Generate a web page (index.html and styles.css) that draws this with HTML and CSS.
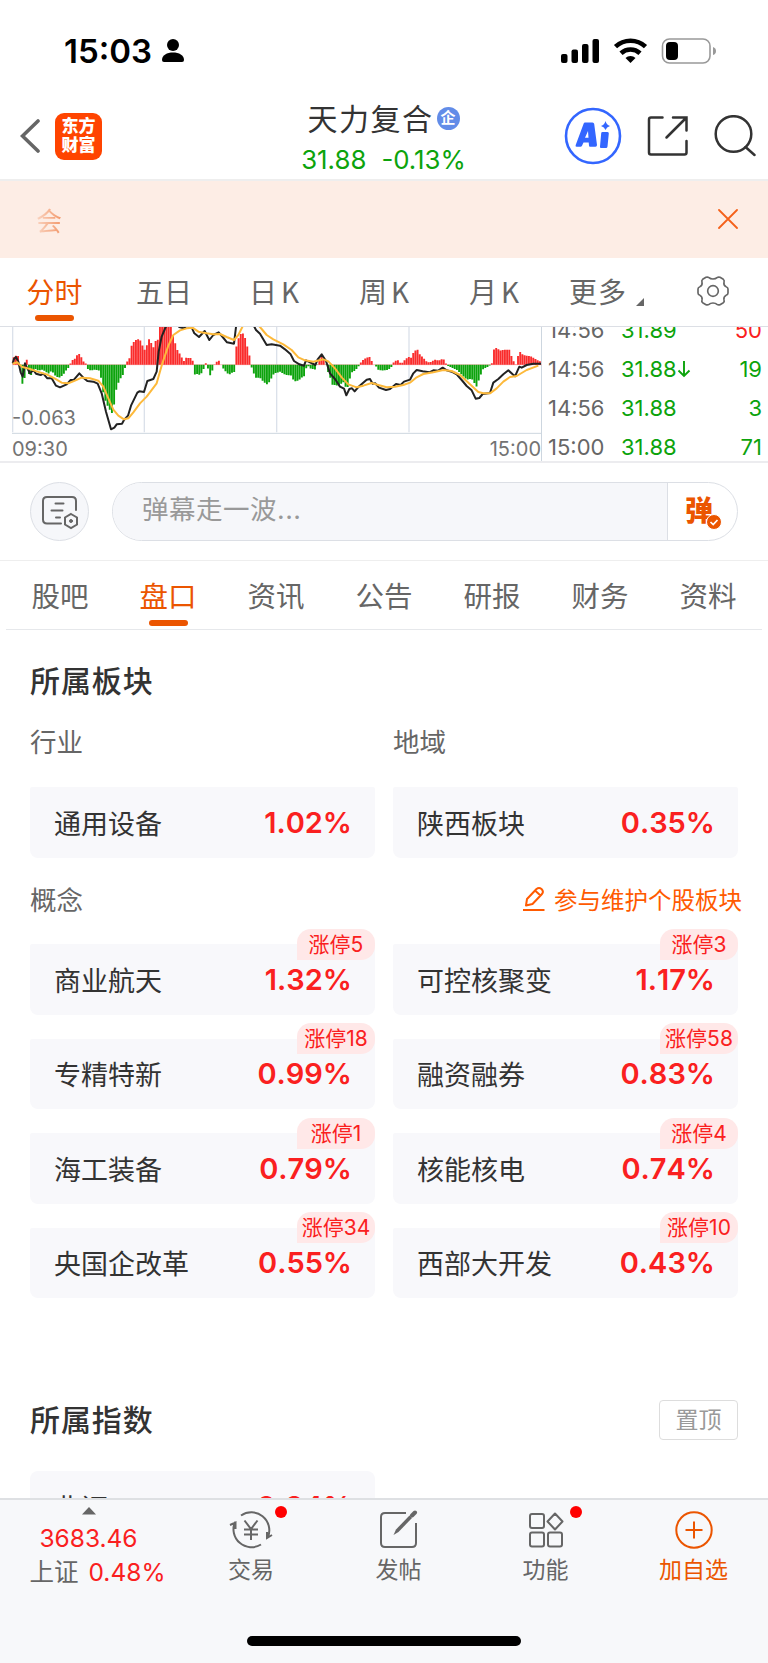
FILE: index.html
```html
<!DOCTYPE html>
<html lang="zh-CN">
  <head>
    <meta charset="utf-8">
    <title>天力复合</title>
    <link rel="stylesheet" href="styles.css">
  </head>
  <body>
    <div class="status-bar">
      <div class="status-time">15:03</div>
      <svg class="status-user" width="24" height="26" viewBox="0 0 24 26"><circle cx="12" cy="7" r="6"/><path d="M1 22C1 17 6 14.500 12 14.500S23 17 23 22Q23 24 21 24H3Q1 24 1 22Z"/></svg>
      <svg class="status-icons" width="158" height="30" viewBox="0 0 158 30">
        <rect x="1" y="18" width="6.500" height="9" rx="2"/>
        <rect x="11.500" y="13.500" width="6.500" height="13.500" rx="2"/>
        <rect x="22" y="8" width="6.500" height="19" rx="2"/>
        <rect x="32.500" y="3" width="6.500" height="24" rx="2"/>
        <g fill="none" stroke="#000" stroke-width="4.600">
          <path d="M55.500 10.600A22 22 0 0 1 85.500 10.600"/>
          <path d="M61 17.200A14 14 0 0 1 80 17.200"/>
        </g>
        <path d="M70.500 27L65.500 22A7 7 0 0 1 75.500 22Z"/>
        <rect x="102.500" y="3" width="47.500" height="24" rx="7" fill="none" stroke="#999" stroke-width="1.600"/>
        <rect x="106" y="6" width="12" height="18" rx="4"/>
        <path d="M153 11Q156 12 156 15T153 19Z" fill="#999"/>
      </svg>
    </div>

    <div class="header">
      <div class="header-left">
        <svg width="20" height="36" viewBox="0 0 20 36"><path d="M18 3L2.500 18L18 33" fill="none" stroke="#666" stroke-width="3.600" stroke-linecap="round"/></svg>
        <div class="logo"><span>东方</span><span>财富</span></div>
      </div>
      <div class="header-title">
        <div class="stock-name">天力复合<span class="tag-qi">企</span></div>
        <div class="stock-price"><span>31.88</span><span>-0.13%</span></div>
      </div>
      <div class="header-right">
        <svg width="58" height="58" viewBox="0 0 58 58">
          <circle cx="29" cy="29" r="27" fill="none" stroke="#3366ff" stroke-width="2.600"/>
          <path fill="#3366ff" fill-rule="evenodd" d="M21 15.500H28.500Q30 15.500 30.200 17L33 38Q33 39.700 31.500 39.700H26Q25 39.700 25 38.500L24.700 35.500H19.500L18 38.700Q17.500 39.700 16.500 39.700H12.500Q11 39.700 11.700 38L19.700 16.500Q20 15.500 21 15.500ZM21 30.700H24.500L24 24Z"/>
          <path fill="#3366ff" d="M38.500 25H43.500Q45 25 44.800 26.500L43.500 39.500Q43.300 41 42 41H37Q35.800 41 36 39.500L37.200 26.300Q37.300 25 38.500 25ZM41.500 14Q42.500 18 46 19Q42.500 20 41.500 23Q40.500 20 37 19Q40.500 18 41.500 14Z"/>
        </svg>
        <svg width="42" height="42" viewBox="0 0 42 42" fill="none" stroke="#333" stroke-width="2.500" stroke-linecap="round"><path d="M15.500 2.500H4Q2 2.500 2 4.500V37.500Q2 39.500 4 39.500H37.500Q39.500 39.500 39.500 37.500V26M26 2.500H39.500V15.500M39.500 2.500L19.500 22.500"/></svg>
        <svg width="42" height="42" viewBox="0 0 42 42" fill="none" stroke="#333" stroke-width="2.500" stroke-linecap="round"><circle cx="19.500" cy="19" r="17.800"/><path d="M31.500 32L40.500 40"/></svg>
      </div>
    </div>

    <div class="notice">
      <span class="notice-text">会</span>
      <svg width="20" height="20" viewBox="0 0 20 20"><path d="M1 1L19 19M19 1L1 19" stroke="#f4611a" stroke-width="1.800" stroke-linecap="round"/></svg>
    </div>

    <div class="period-tabs">
      <div class="period active">分时</div>
      <div class="period">五日</div>
      <div class="period">日<span class="k">K</span></div>
      <div class="period">周<span class="k">K</span></div>
      <div class="period">月<span class="k">K</span></div>
      <div class="period more">更多<svg width="8" height="8" viewBox="0 0 8 8"><path d="M8 0V8H0Z" fill="#666"/></svg></div>
      <div class="period gear"><svg width="34" height="32" viewBox="-51 -48 102 96" fill="none" stroke="#666" stroke-width="5" stroke-linejoin="round"><path d="M0-36Q8-36 12-40Q16-43 21-41L31-35Q35-32 33-26Q31-18 39-13Q45-11 45-6V6Q45 11 39 13Q31 18 33 26Q35 32 31 35L21 41Q16 43 12 40Q8 36 0 36Q-8 36-12 40Q-16 43-21 41L-31 35Q-35 32-33 26Q-31 18-39 13Q-45 11-45 6V-6Q-45-11-39-13Q-31-18-33-26Q-35-32-31-35L-21-41Q-16-43-12-40Q-8-36 0-36Z"/><circle r="16"/></svg></div>
    </div>

    <div class="quote">
      <div class="chart">
        <svg width="542" height="107" viewBox="0 36 1626 321" fill="none">
          <path d="M38 33V352M433 33V352M830 33V352M1227 33V352" stroke="#dbe1ea" stroke-width="4"/>
          <path d="M36 355H1626" stroke="#cdd6df" stroke-width="3"/>
          <g id="bars"></g>
          <g stroke-linejoin="round" stroke-width="6">
            <path stroke="#222" d="M38 145L42 132L48 126L55 140L62 172L68 185L75 145L82 160L90 175L100 165L108 176L122 180L130 176L142 190L155 190L168 212L180 217L200 208L212 195L222 194L238 175L250 188L262 198L280 200L293 206L305 235L318 290L333 343L343 338L350 328L366 326L372 315L384 302L393 272L412 233L418 229L432 231L442 198L460 192L470 170L476 110L485 65L497 36L520 15L538 36L552 40L560 33L575 37L583 55L597 66L614 48L628 75L640 60L656 52L668 66L681 82L702 86L708 36L715 10L755 20L768 45L780 56L800 90L815 88L840 92L855 103L872 118L882 138L898 148L912 152L918 136L930 142L946 150L953 133L965 118L978 138L990 175L1005 192L1020 215L1032 221L1039 241L1048 222L1056 220L1064 229L1075 216L1100 194L1110 192L1118 206L1126 205L1137 218L1158 225L1170 222L1188 207L1202 210L1212 200L1230 194L1240 175L1250 165L1268 169L1288 172L1300 166L1315 167L1328 158L1340 166L1355 170L1370 178L1385 195L1400 213L1415 226L1427 251L1438 249L1448 237L1470 234L1480 203L1495 192L1510 178L1525 166L1538 178L1545 184L1558 155L1565 158L1580 150L1600 146L1623 146"/>
            <path stroke="#fdb93a" d="M38 146L52 142L65 155L90 162L110 169L140 178L165 191L185 203L205 205L225 197L245 188L270 190L295 197L310 215L325 250L340 284L355 302L372 313L385 310L400 292L420 265L440 245L470 205L487 145L505 92L520 60L540 46L560 40L578 38L595 50L620 55L640 58L660 57L680 66L702 75L715 60L727 36L735 15L770 25L785 42L800 60L820 73L850 88L875 105L895 127L915 136L940 140L970 133L985 139L1005 160L1025 187L1045 208L1070 217L1090 212L1115 204L1135 210L1160 217L1185 215L1210 210L1230 203L1250 187L1270 177L1300 172L1330 165L1355 168L1380 180L1410 208L1435 231L1450 235L1470 235L1490 220L1510 200L1530 186L1550 183L1580 165L1615 152"/>
          </g>
        </svg>
        <div class="chart-min">-0.063</div>
        <div class="chart-times"><span>09:30</span><span>15:00</span></div>
      </div>
      <div class="ticks">
        <div class="tick"><span>14:56</span><span class="down">31.89</span><span class="vol up">50</span></div>
        <div class="tick"><span>14:56</span><span class="down">31.88<svg width="14" height="18" viewBox="0 0 14 18"><path d="M7 1V16M1.500 10.500L7 16L12.500 10.500" fill="none" stroke="#0ca30c" stroke-width="1.900"/></svg></span><span class="vol down">19</span></div>
        <div class="tick"><span>14:56</span><span class="down">31.88</span><span class="vol down">3</span></div>
        <div class="tick"><span>15:00</span><span class="down">31.88</span><span class="vol down">71</span></div>
      </div>
    </div>

    <div class="danmu">
      <div class="danmu-setting">
        <svg width="38" height="36" viewBox="0 0 38 36" fill="none" stroke="#666" stroke-width="2" stroke-linecap="round"><path d="M20 28.500H6Q2 28.500 2 24.500V6Q2 2 6 2H31Q35 2 35 6V15M14.500 8.500H22.500M10.500 15.500H21.500M15 22.500H19"/><path d="M30 19L36 22.500V29.500L30 33L24 29.500V22.500Z"/><circle cx="30" cy="26" r="1.500" fill="#666" stroke-width="1"/></svg>
      </div>
      <div class="danmu-box">
        <div class="danmu-input">弹幕走一波...</div>
        <div class="danmu-send">弹<svg width="16" height="16" viewBox="0 0 16 16"><circle cx="8" cy="8" r="7.500" fill="#eb5500" stroke="#fff"/><path d="M4.500 8L7.200 10.500L11.500 6" fill="none" stroke="#fff" stroke-width="1.700"/></svg></div>
      </div>
    </div>

    <div class="main-tabs">
      <div class="tab">股吧</div>
      <div class="tab active">盘口</div>
      <div class="tab">资讯</div>
      <div class="tab">公告</div>
      <div class="tab">研报</div>
      <div class="tab">财务</div>
      <div class="tab">资料</div>
    </div>

    <div class="content">
      <h2 class="section-title">所属板块</h2>
      <div class="sub-row first"><span>行业</span><span>地域</span></div>
      <div class="cards">
        <div class="card"><span>通用设备</span><b>1.02%</b></div>
        <div class="card"><span>陕西板块</span><b>0.35%</b></div>
      </div>
      <div class="sub-row">
        <span>概念</span>
        <span class="edit"><svg width="24" height="26" viewBox="0 0 24 26" fill="none" stroke="#ff5a00" stroke-width="2" stroke-linejoin="round"><path d="M1 24H22.500"/><path d="M4 19.500L5 13L14.500 3Q17 1 19.500 3Q22 5.500 20 8L10.500 18ZM13 4.500L18.500 9.500"/></svg>参与维护个股板块</span>
      </div>
      <div class="cards">
        <div class="card"><span>商业航天</span><b>1.32%</b><i class="badge">涨停5</i></div>
        <div class="card"><span>可控核聚变</span><b>1.17%</b><i class="badge">涨停3</i></div>
        <div class="card"><span>专精特新</span><b>0.99%</b><i class="badge">涨停18</i></div>
        <div class="card"><span>融资融券</span><b>0.83%</b><i class="badge">涨停58</i></div>
        <div class="card"><span>海工装备</span><b>0.79%</b><i class="badge">涨停1</i></div>
        <div class="card"><span>核能核电</span><b>0.74%</b><i class="badge">涨停4</i></div>
        <div class="card"><span>央国企改革</span><b>0.55%</b><i class="badge">涨停34</i></div>
        <div class="card"><span>西部大开发</span><b>0.43%</b><i class="badge">涨停10</i></div>
      </div>
      <div class="index-head">
        <h2 class="section-title">所属指数</h2>
        <div class="pin">置顶</div>
      </div>
      <div class="cards">
        <div class="card index-card"><span>北证50</span><b>0.34%</b></div>
      </div>
    </div>

    <div class="footer">
      <div class="market">
        <svg width="14" height="8" viewBox="0 0 14 8"><path d="M7 0L14 7.500H0Z" fill="#666"/></svg>
        <div class="market-value">3683.46</div>
        <div class="market-name">上证<span>0.48%</span></div>
      </div>
      <div class="nav">
        <svg width="44" height="40" viewBox="0 0 44 40" fill="none" stroke="#666" stroke-width="2"><path d="M12 5.500A18 18 0 0 1 39 27M32 34.500A18 18 0 0 1 6 12M1 15L6.500 12.500V19M43 25L38 28V22M15.500 10.500L22 19L28.500 10.500M22 19V30M15 19.500H29M15 24.500H29"/></svg>
        <span>交易</span><i class="dot"></i>
      </div>
      <div class="nav">
        <svg width="44" height="40" viewBox="0 0 44 40" fill="none" stroke="#666" stroke-width="2"><path d="M29 3H8Q4 3 4 7V33Q4 37 8 37H35Q39 37 39 33V13"/><path d="M16.500 25L19 19.500L32.500 5.500L35 8L21.500 22Z" fill="#666" stroke="none"/><path d="M35 5.500L38 2.500" stroke-width="4" stroke-linecap="round"/></svg>
        <span>发帖</span>
      </div>
      <div class="nav">
        <svg width="44" height="40" viewBox="0 0 44 40" fill="none" stroke="#666" stroke-width="2" stroke-linejoin="round"><rect x="6" y="4" width="14" height="14" rx="2"/><rect x="6" y="22.500" width="14" height="14" rx="2"/><rect x="24" y="22.500" width="14" height="14" rx="2"/><path d="M31 3.500L38.500 11.500L31 19.500L23.500 11.500Z"/></svg>
        <span>功能</span><i class="dot"></i>
      </div>
      <div class="nav add">
        <svg width="44" height="40" viewBox="0 0 44 40" fill="none" stroke="#eb5500" stroke-width="2"><circle cx="22" cy="20" r="17.700"/><path d="M13.500 20H30.500M22 11.500V28.500"/></svg>
        <span>加自选</span>
      </div>
      <div class="home-bar"></div>
    </div>
    <script src="chart.js"></script>
  </body>
</html>
```
FILE: chart.js
```js
// [x, height] points of the histogram, heights are signed
var points = [
  [38, 6], [44, 9], [54, 9], [57, 2], [61, -3], [64, -19], [73, -19], [76, 4], [81, 5], [83, -8], [92, -11], [99, -8],
  [105, -4], [115, -6], [128, -5], [145, -9], [155, -6], [168, -12], [178, -13], [190, -10], [200, -5], [208, -2],
  [211, 1], [216, 5], [222, 4], [228, 9], [240, 11], [248, 4], [258, 1], [262, -4], [272, -6], [285, -5], [298, -6],
  [303, -13], [312, -33], [325, -43], [337, -49], [345, -35], [350, -22], [357, -17], [363, -13], [371, -9],
  [379, 2], [388, 6], [393, 18], [402, 23], [412, 26], [422, 24], [430, 17], [436, 14], [446, 26], [455, 21],
  [461, 17], [468, 25], [476, 25], [480, 42], [512, 42], [517, 32], [525, 22], [533, 14], [541, 10], [549, 5],
  [553, 3], [560, 8], [567, 6], [575, 7], [580, 2], [584, -10], [595, -9], [600, -11], [607, -7], [614, -2],
  [619, 3], [624, -4], [631, -11], [638, -5], [643, 0], [650, 3], [658, 4], [663, 0], [670, -4], [680, -8],
  [687, -10], [697, -8], [706, -7], [709, 18], [717, 28], [725, 32], [733, 30], [740, 20], [746, 14], [752, 2],
  [757, -6], [768, -13], [780, -13], [790, -17], [803, -20], [812, -15], [822, -9], [840, -7], [855, -10],
  [875, -11], [882, -17], [895, -16], [905, -13], [916, -11], [920, 0], [927, -2], [932, -4], [948, -5],
  [954, 3], [965, 10], [975, 4], [980, -4], [990, -12], [995, -20], [1015, -21], [1032, -17], [1040, -26],
  [1048, -17], [1053, -8], [1065, -6], [1075, -2], [1080, 1], [1086, 4], [1100, 7], [1113, 8], [1117, 0],
  [1126, 0], [1132, -5], [1150, -6], [1165, -5], [1175, -2], [1180, 2], [1192, 5], [1200, 2], [1207, 2],
  [1215, 5], [1225, 8], [1232, 6], [1240, 12], [1251, 16], [1260, 10], [1270, 7], [1280, 3], [1288, 2],
  [1305, 5], [1315, 4], [1330, 6], [1338, 1], [1343, -1], [1355, -3], [1370, -5], [1385, -10], [1400, -15],
  [1415, -14], [1430, -22], [1440, -12], [1450, -4], [1465, -2], [1472, 0], [1477, 2], [1481, 15], [1490, 17],
  [1500, 14], [1515, 15], [1528, 15], [1535, 8], [1543, 2], [1548, 0], [1553, 8], [1561, 13], [1568, 10],
  [1580, 9], [1595, 8], [1610, 5], [1623, 3]
];
var red = "";
var green = "";
var i = 0;
for (var x = 41; x < 1624; x += 6.55) {
  while (points[i + 1][0] < x) i++;
  var a = points[i];
  var b = points[i + 1];
  var h = 3 * (a[1] + (b[1] - a[1]) * (x - a[0]) / (b[0] - a[0]));
  if (h > 0) red += "M" + x + " 149V" + (149 - h);
  if (h < 0) green += "M" + x + " 149V" + (149 - h);
}
document.getElementById("bars").innerHTML =
  '<path d="M38 149H1626" stroke="#f7a0a0" stroke-width="2"/>' +
  '<path d="' + red + '" stroke="#fa2c2c" stroke-width="5.700"/>' +
  '<path d="' + green + '" stroke="#0ca30c" stroke-width="5.700"/>';
```
FILE: styles.css
```css
* {
  box-sizing: border-box;
}
body {
  margin: 0;
  width: 768px;
  height: 1663px;
  overflow: hidden;
  display: flex;
  flex-direction: column;
  background: #fff;
  color: #333;
  font-family: Inter, "Noto Sans CJK SC", sans-serif;
}
svg {
  display: block;
  flex: none;
}
.status-bar {
  height: 93px;
  padding: 9px 50px 0 64px;
  display: flex;
  align-items: center;
  flex: none;
}
.status-time {
  width: 97px;
  font-size: 33px;
  font-weight: 600;
  color: #000;
}
.status-icons {
  margin-left: auto;
}
.header {
  flex: none;
  height: 88px;
  padding: 0 11px 0 20px;
  display: grid;
  grid-template-columns: 200px 1fr 193px;
  align-items: center;
  border-bottom: 2px solid #eee;
}
.header-left {
  display: flex;
  align-items: center;
  gap: 15px;
}
.logo {
  width: 47px;
  height: 47px;
  border-radius: 9px;
  background: #ff4400;
  color: #fff;
  font-size: 17px;
  font-weight: 900;
  line-height: 19px;
  display: flex;
  flex-direction: column;
  align-items: center;
  justify-content: center;
}
.header-title {
  padding: 5px 17px 0 0;
  text-align: center;
}
.stock-name {
  display: flex;
  align-items: center;
  justify-content: center;
  font-size: 30px;
  letter-spacing: 1.500px;
  line-height: 42px;
  height: 40px;
}
.tag-qi {
  width: 23px;
  height: 23px;
  margin-left: 3px;
  border-radius: 50%;
  background: #628ce8;
  color: #fff;
  font-size: 15px;
  font-weight: 700;
  line-height: 22px;
  letter-spacing: 0;
}
.stock-price {
  display: flex;
  justify-content: center;
  gap: 15px;
  padding-top: 2px;
  font-size: 25.800px;
  line-height: 38px;
  color: #0ca30c;
}
.header-right {
  display: flex;
  align-items: center;
  gap: 25px;
}
.notice {
  flex: none;
  height: 77px;
  padding: 0 30px 2px 36px;
  display: flex;
  align-items: center;
  justify-content: space-between;
  background: #fdede5;
}
.notice-text {
  font-size: 26px;
  padding-top: 1px;
  background: linear-gradient(90deg, #fad5c2, #f29668);
  -webkit-background-clip: text;
  color: transparent;
}
.period-tabs {
  flex: none;
  height: 69px;
  display: grid;
  grid-template-columns: 109px 110px 110px 110px 110px 110px 1fr;
  border-bottom: 1px solid #dcdfe5;
}
.period {
  display: flex;
  justify-content: center;
  align-items: center;
  position: relative;
  padding-bottom: 2px;
  font-size: 28px;
  color: #666;
}
.k {
  margin-left: 4px;
  font-family: "Noto Sans CJK SC", sans-serif;
}
.period.more {
  padding-left: 5px;
  letter-spacing: 1px;
}
.more svg {
  margin: 22px 0 0 9px;
}
.gear {
  padding-right: 1px;
}
.period.active,
.tab.active {
  color: #eb5500;
}
.period.active::after,
.tab.active::after {
  content: "";
  position: absolute;
  left: 50%;
  margin-left: -19.500px;
  bottom: 5px;
  width: 39px;
  height: 6px;
  border-radius: 3px;
  background: #eb5500;
}
.quote {
  flex: none;
  display: flex;
  height: 136px;
  border-bottom: 2px solid #ececef;
  overflow: hidden;
}
.chart {
  width: 542px;
  position: relative;
  border-right: 1px solid #cdd6df;
}
.chart-min {
  position: absolute;
  left: 12px;
  top: 79px;
  font-size: 20px;
  line-height: 24px;
  color: #737373;
}
.chart-times {
  display: flex;
  justify-content: space-between;
  padding: 3px 0 0 12px;
  font-size: 20px;
  line-height: 24px;
  color: #737373;
}
.ticks {
  flex: 1;
  display: flex;
  flex-direction: column;
  justify-content: flex-end;
}
.tick {
  flex: none;
  display: grid;
  grid-template-columns: 73px 80px 1fr;
  height: 39.200px;
  line-height: 39px;
  padding: 0 6px 0 6px;
  font-size: 22px;
  color: #666;
}
.tick:last-child {
  height: 33px;
}
.tick span {
  display: flex;
  align-items: center;
}
.tick .vol {
  justify-content: flex-end;
}
.tick .down {
  color: #0ca30c;
}
.tick .up {
  color: #fa2020;
}
.danmu {
  flex: none;
  height: 98px;
  padding: 0 30px;
  display: flex;
  align-items: center;
  gap: 23px;
  border-bottom: 1px solid #eee;
}
.danmu-setting {
  width: 59px;
  height: 59px;
  padding: 3px 0 0 0;
  display: flex;
  align-items: center;
  justify-content: center;
  border: 1px solid #dcdfe5;
  border-radius: 50%;
  background: #f6f7fa;
}
.danmu-box {
  flex: 1;
  height: 59px;
  display: flex;
  border: 1px solid #dcdfe5;
  border-radius: 30px;
  overflow: hidden;
}
.danmu-input {
  flex: 1;
  padding-left: 29px;
  background: #f6f7fa;
  border-right: 1px solid #dcdfe5;
  color: #999;
  font-size: 26.500px;
  line-height: 52px;
  letter-spacing: 0.500px;
}
.danmu-send {
  position: relative;
  width: 69px;
  padding-left: 17px;
  font-size: 28px;
  font-weight: 900;
  line-height: 56px;
  color: #eb5500;
}
.danmu-send svg {
  position: absolute;
  left: 38px;
  top: 31px;
}
.main-tabs {
  flex: none;
  height: 69px;
  margin: 0 6px;
  display: flex;
  justify-content: space-between;
  border-bottom: 1px solid #e6e8eb;
}
.tab {
  width: 108px;
  padding-bottom: 1px;
  position: relative;
  display: flex;
  align-items: center;
  justify-content: center;
  font-size: 28.500px;
  color: #666;
}
.tab.active::after {
  bottom: 3px;
}
.content {
  flex: 1;
  min-height: 0;
  overflow: hidden;
  padding: 29px 30px 0;
}
.section-title {
  margin: 0;
  font-size: 30px;
  font-weight: 500;
  letter-spacing: 0.900px;
  line-height: 44px;
}
.sub-row {
  display: flex;
  justify-content: space-between;
  align-items: center;
  height: 86.500px;
  padding-bottom: 4px;
  font-size: 26.500px;
  color: #666;
}
.sub-row.first {
  display: grid;
  grid-template-columns: 1fr 1fr;
  column-gap: 18px;
  height: 84px;
  padding-bottom: 9px;
}
.edit {
  display: flex;
  align-items: center;
  gap: 8px;
  margin-right: -4px;
  color: #ff5a00;
  font-size: 23.500px;
}
.cards {
  display: grid;
  grid-template-columns: 1fr 1fr;
  gap: 24px 18px;
}
.card {
  position: relative;
  display: flex;
  align-items: center;
  justify-content: space-between;
  height: 70.500px;
  padding: 0 23px 0 24px;
  border-radius: 2px 2px 8px 8px;
  background: #f8f8fb;
  font-size: 27px;
}
.card b {
  font-size: 29px;
  font-weight: 600;
  font-kerning: none;
  color: #fa2020;
}
.badge {
  position: absolute;
  right: 0;
  top: -15.500px;
  width: 78px;
  height: 31px;
  border-radius: 14px 14px 14px 0;
  background: #ffe8e8;
  color: #fa2020;
  font-size: 21px;
  font-style: normal;
  line-height: 31px;
  text-align: center;
  white-space: nowrap;
}
.index-head {
  display: flex;
  align-items: center;
  justify-content: space-between;
  margin-top: 100px;
  margin-bottom: 29px;
}
.pin {
  width: 79px;
  height: 40px;
  border: 1px solid #ddd;
  border-radius: 4px;
  color: #999;
  font-size: 23px;
  line-height: 38px;
  text-align: center;
}
.index-card {
  border-radius: 8px;
}
.footer {
  flex: none;
  height: 165px;
  position: relative;
  display: grid;
  grid-template-columns: 177px 148px 147px 147px 149px;
  border-top: 2px solid #dee0e3;
  background: #f7f8fa;
}
.market {
  display: flex;
  flex-direction: column;
  align-items: center;
  padding-top: 7px;
  font-size: 24.500px;
  white-space: nowrap;
}
.market-value {
  margin-top: 6px;
  line-height: 34px;
  color: #fa2020;
}
.market-name {
  display: flex;
  gap: 10px;
  padding-left: 18px;
  line-height: 34px;
  color: #666;
}
.market-name span {
  color: #fa2020;
}
.nav {
  position: relative;
  display: flex;
  flex-direction: column;
  align-items: center;
  padding-top: 10px;
  font-size: 23px;
  line-height: 40px;
  color: #666;
}
.nav.add {
  color: #eb5500;
}
.dot {
  position: absolute;
  left: 98px;
  top: 6px;
  width: 12px;
  height: 12px;
  border-radius: 50%;
  background: #f00;
}
.home-bar {
  position: absolute;
  left: 247px;
  bottom: 17px;
  width: 274px;
  height: 10px;
  border-radius: 5px;
  background: #000;
}
```
